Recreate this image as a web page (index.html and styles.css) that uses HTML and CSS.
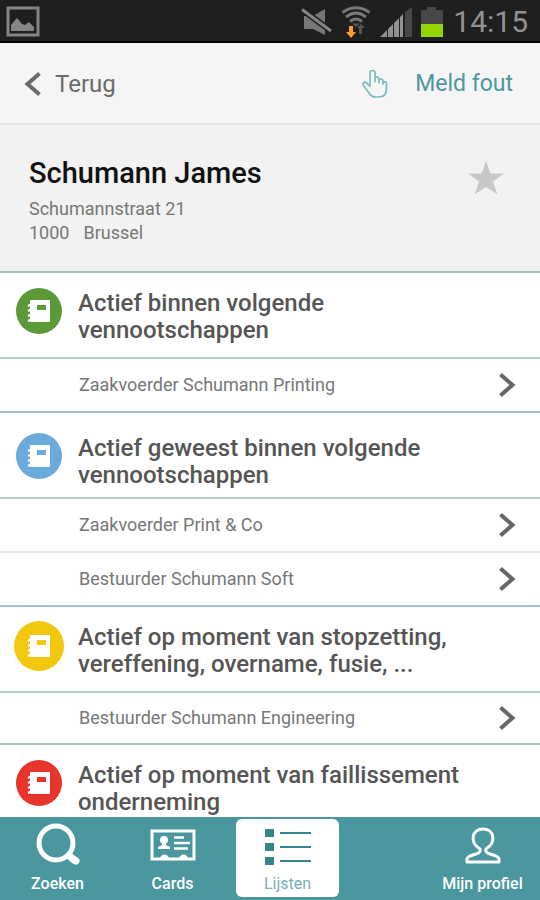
FILE: index.html
```html
<!DOCTYPE html>
<html lang="nl">
<head>
<meta charset="utf-8">
<meta name="viewport" content="width=device-width, initial-scale=1">
<title>Schumann James</title>
<link rel="stylesheet" href="styles.css">
</head>
<body>
<svg class="defs" aria-hidden="true">
  <symbol id="book" viewBox="0 0 24 24">
    <path fill="currentColor" fill-rule="evenodd" d="M4 1h18a1 1 0 0 1 1 1v20a1 1 0 0 1-1 1H4a1 1 0 0 1-1-1V2a1 1 0 0 1 1-1zM10 6v5h9V6z"/>
    <path fill="none" stroke="currentColor" stroke-width="2" d="M1 7l4-2M1 12l4-2M1 17l4-2M1 22l4-2"/>
  </symbol>
  <symbol id="chevron" viewBox="0 0 18 26">
    <path d="M2.500 2.500 14.500 13 2.500 23.500" fill="none" stroke="currentColor" stroke-width="4"/>
  </symbol>
</svg>
<div class="app">
  <header class="status">
    <svg class="status-picture" width="36" height="32" viewBox="0 0 36 32">
      <rect x="3" y="2" width="30" height="27" fill="none" stroke="#858585" stroke-width="3"/>
      <path d="M6 25v-6l6-7 5 6 3 1 4-3 5 5v4z" fill="#858585"/>
    </svg>
    <svg width="32" height="32" viewBox="0 0 32 32">
      <path d="M3 10h9L24 3v26l-12-6H3z" fill="#777"/>
      <path d="M1 3.500 30 25" stroke="#1f1f1f" stroke-width="6"/>
      <path d="M1 3.500 30 25" stroke="#858585" stroke-width="3"/>
    </svg>
    <svg class="status-wifi" width="30" height="32" viewBox="0 0 30 32">
      <g fill="none" stroke="#777" stroke-width="3">
        <path d="M1.500 6.500Q15-3 28.500 6.500"/>
        <path d="M5 11Q15 3 25 11"/>
        <path d="M9 15.500Q15 10.500 21 15.500"/>
      </g>
      <path d="M11 17.500h8L15 21zM16 22l4-4 4 4h-3v6h-3v-6z" fill="#555"/>
      <path d="M8 20h4v6h3l-5 6-5-6h3z" fill="#ff9d2e"/>
    </svg>
    <svg class="status-signal" width="34" height="32" viewBox="0 0 34 32">
      <path d="M1 31 8 24v7zM9 23l5-5v13H9zM15 17l5-5v19h-5zM21 11l3-3v23h-3z" fill="#929292"/>
      <path d="M26 6 33 1v30h-7z" fill="#484848"/>
    </svg>
    <svg class="status-battery" width="22" height="32" viewBox="0 0 22 32">
      <path d="M0 4h6V1h9v3h7v14H0z" fill="#484848"/>
      <path d="M0 18h22v13H0z" fill="#94d500"/>
    </svg>
    <time class="clock">14:15</time>
  </header>

  <nav class="topbar">
    <button class="back" type="button">
      <svg width="18" height="26" viewBox="0 0 18 26"><path d="M15.500 2.500 3.500 13l12 10.500" fill="none" stroke="#6b6b6b" stroke-width="4"/></svg>
      Terug
    </button>
    <button class="report" type="button">
      <svg width="28" height="30" viewBox="0 0 28 30"><path d="M9 17V4a2.500 2.500 0 0 1 5 0v8.500M14 12V10a2 2 0 0 1 4 0v3.500M18 12a2 2 0 0 1 4 0v3M22 13.500a2 2 0 0 1 3.500 1V20c0 5-3 8-8 8h-3c-3 0-5-1.500-6.500-4L2.500 16.500c-1.500-2.500 1-4.500 3-2.500L9 17" fill="none" stroke="#7dbbbe" stroke-width="1.700" stroke-linejoin="round" stroke-linecap="round"/></svg>
      Meld fout
    </button>
  </nav>

  <section class="profile">
    <div>
      <h1>Schumann James</h1>
      <address>
        <span>Schumannstraat 21</span>
        <span class="city"><span>1000</span><span>Brussel</span></span>
      </address>
    </div>
    <button class="favorite" type="button" aria-label="Favoriet">
      <svg width="38" height="36" viewBox="0 0 38 36"><path d="M19 1l4.500 12.500H37L26 21.500 30.500 34.500 19 27 7.500 34.500 12 21.500 1 13.500h13.500z" fill="#c8c8c8"/></svg>
    </button>
  </section>

  <main class="list">
    <section>
      <h2><span class="badge green"><svg><use href="#book"/></svg></span>Actief binnen volgende<br>vennootschappen</h2>
      <a class="row" href="#printing">Zaakvoerder Schumann Printing<svg class="chevron"><use href="#chevron"/></svg></a>
    </section>
    <section>
      <h2 class="low"><span class="badge blue"><svg><use href="#book"/></svg></span>Actief geweest binnen volgende<br>vennootschappen</h2>
      <a class="row" href="#print-co">Zaakvoerder Print &amp; Co<svg class="chevron"><use href="#chevron"/></svg></a>
      <a class="row" href="#soft">Bestuurder Schumann Soft<svg class="chevron"><use href="#chevron"/></svg></a>
    </section>
    <section>
      <h2><span class="badge yellow"><svg><use href="#book"/></svg></span>Actief op moment van stopzetting,<br>vereffening, overname, fusie, ...</h2>
      <a class="row compact" href="#engineering">Bestuurder Schumann Engineering<svg class="chevron"><use href="#chevron"/></svg></a>
    </section>
    <section>
      <h2><span class="badge red"><svg><use href="#book"/></svg></span>Actief op moment van faillissement<br>onderneming</h2>
    </section>
  </main>

  <nav class="tabs">
    <a class="tab" href="#zoeken">
      <svg width="46" height="44" viewBox="0 0 46 44"><circle cx="21" cy="20" r="17" fill="none" stroke="#fff" stroke-width="5"/><path d="M32 31l9 7.500" stroke="#fff" stroke-width="7"/><path d="M38 36l3 2" stroke="#fff" stroke-width="7" stroke-linecap="round"/></svg>
      Zoeken
    </a>
    <a class="tab" href="#cards">
      <svg width="46" height="44" viewBox="0 0 46 44">
        <rect x="2" y="8" width="42" height="28" fill="none" stroke="#fff" stroke-width="3"/>
        <circle cx="14" cy="17" r="4" fill="#fff"/>
        <path d="M12 19h4v3l4 2v2H8v-2l4-2zM10 36c0-6 9-6 9 0zM29 36c0-6 9-6 9 0z" fill="#fff"/>
        <path d="M24 14.500h10M24 20h16M24 25.500h14" stroke="#fff" stroke-width="2.500"/>
      </svg>
      Cards
    </a>
    <a class="tab active" href="#lijsten" aria-current="page">
      <svg width="46" height="44" viewBox="0 0 46 44"><path d="M0 6h9v8H0zM0 20h9v8H0zM0 34h9v8H0zM15 9h31v2H15zM15 23h31v2H15zM15 37h31v2H15z" fill="#35848d"/></svg>
      Lijsten
    </a>
    <a class="tab last" href="#profiel">
      <svg width="46" height="44" viewBox="0 0 46 44"><path d="M20 26C9 19 12 6 23 6S37 19 26 26c-1 3 1 4 4 5l6 2c2 1 3 1.500 3 3v3H7v-3c0-1.500 1-2 3-3l6-2c3-1 5-2 4-5z" fill="none" stroke="#fff" stroke-width="3" stroke-linejoin="round"/></svg>
      Mijn profiel
    </a>
  </nav>
</div>
</body>
</html>
```
FILE: styles.css
```css
* {
  box-sizing: border-box;
}

body {
  margin: 0;
  background: #fff;
  color: #555;
  font-family: Roboto, "Liberation Sans", sans-serif;
}

h1,
h2 {
  margin: 0;
  font-weight: 500;
}

button {
  padding: 0;
  border: 0;
  background: none;
  font: inherit;
}

a {
  text-decoration: none;
}

svg {
  display: block;
  flex: none;
}

.defs {
  position: absolute;
  width: 0;
  height: 0;
}

.app {
  display: flex;
  flex-direction: column;
  height: 100vh;
}

.status {
  display: flex;
  align-items: center;
  gap: 8px;
  padding: 6px 12px 3px 5px;
  border-bottom: 2px solid #050505;
  background: #1f1f1f;
}

.status-picture {
  margin-right: auto;
}

.clock {
  margin-left: 2px;
  color: #929292;
  font-size: 30px;
  line-height: 32px;
}

.topbar {
  display: flex;
  align-items: center;
  justify-content: space-between;
  padding: 26px 27px 24px 24px;
  border-bottom: 2px solid #e3e3e3;
  background: #f5f5f5;
  font-size: 24px;
  line-height: 30px;
}

.back,
.report {
  display: flex;
  align-items: center;
}

.back {
  gap: 13px;
  color: #6b6b6b;
}

.report {
  gap: 26px;
  color: #4c989e;
  font-size: 23px;
}

.profile {
  display: flex;
  align-items: flex-start;
  justify-content: space-between;
  padding: 30px 35px 26px 29px;
  border-bottom: 2px solid #a5c4b9;
  background: #f2f2f2;
}

h1 {
  color: #111;
  font-size: 29px;
  line-height: 36px;
}

address {
  display: grid;
  margin-top: 6px;
  color: #777;
  font-size: 18px;
  font-style: normal;
  line-height: 24px;
}

.city {
  display: flex;
  gap: 14px;
}

.favorite {
  margin-top: 5px;
}

.list {
  flex: 1;
  min-height: 0;
  overflow: hidden;
}

h2 {
  position: relative;
  height: 86px;
  padding: 17px 16px 13px 78px;
  border-bottom: 2px solid #b3cec8;
  font-size: 24px;
  line-height: 27px;
}

h2.low {
  padding-top: 22px;
}

.badge {
  position: absolute;
  top: 15px;
  left: 16px;
  display: grid;
  place-items: center;
  width: 46px;
  height: 46px;
  border-radius: 50%;
  color: #fff;
}

.low .badge {
  top: 20px;
}

.badge svg {
  width: 24px;
  height: 24px;
}

.green {
  background: #5b9a37;
}

.blue {
  background: #6aabdc;
}

.yellow {
  top: 14px;
  left: 14px;
  width: 50px;
  height: 50px;
  background: #f2c80f;
}

.red {
  background: #e8352c;
}

.row {
  display: flex;
  align-items: center;
  justify-content: space-between;
  height: 54px;
  padding: 0 24px 0 79px;
  border-bottom: 2px solid #e6eaea;
  color: #777;
  font-size: 18px;
  line-height: 24px;
}

.row.compact {
  height: 52px;
}

.row:last-child {
  border-bottom-color: #a3c5c4;
}

.chevron {
  width: 18px;
  height: 26px;
  color: #666;
}

.tabs {
  display: grid;
  grid-template-columns: 23fr 23fr 23fr 16fr 23fr;
  background: #4b979f;
}

.tab {
  display: flex;
  flex-direction: column;
  align-items: center;
  gap: 6px;
  margin: 2px 6px 3px;
  padding: 4px 0 2px;
  color: #fff;
  font-size: 16px;
  font-weight: 500;
  line-height: 22px;
  white-space: nowrap;
}

.active {
  border-radius: 6px;
  background: #fff;
  color: #78b0b5;
  font-weight: 400;
}

.last {
  grid-column: 5;
}
```
